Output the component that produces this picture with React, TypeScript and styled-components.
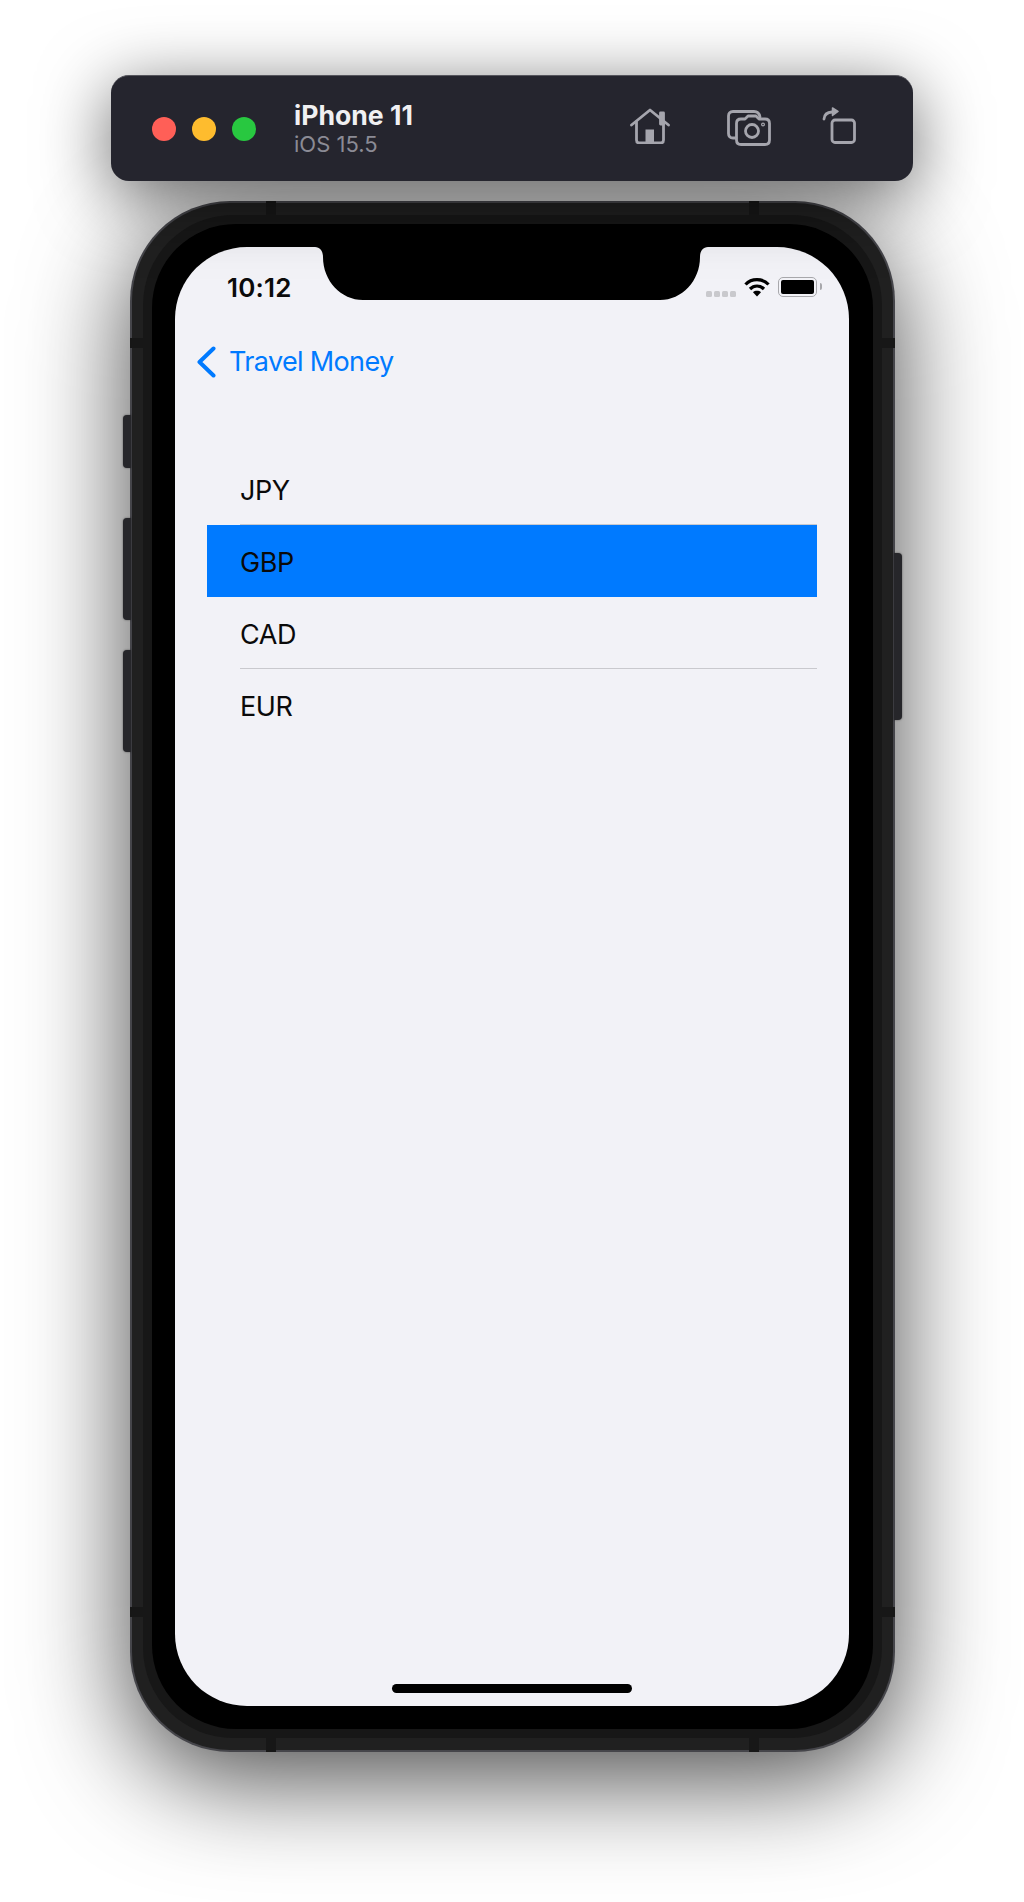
import React from 'react';
import styled, { createGlobalStyle } from 'styled-components';

const GlobalStyle = createGlobalStyle`
    html, body {
        margin: 0;
        background: #ffffff;
        font-family: Inter, "Liberation Sans", sans-serif;
    }
`;

const Page = styled.div`
    width: 1024px;
    height: 1902px;
    padding-top: 75px;
    box-sizing: border-box;
    overflow: hidden;
    display: flex;
    flex-direction: column;
    align-items: center;
`;

const Toolbar = styled.div`
    width: 802px;
    height: 106px;
    box-sizing: border-box;
    padding: 0 57px 0 41px;
    display: flex;
    align-items: center;
    background: #25252e;
    border-top: 1px solid #55555c;
    border-radius: 18px;
    box-shadow: 0 14px 70px rgba(0, 0, 0, 0.6);
    position: relative;
    z-index: 2;
`;

const Lights = styled.div`
    display: flex;
    gap: 16px;
`;

const Light = styled.span<{ $color: string }>`
    width: 24px;
    height: 24px;
    border-radius: 50%;
    background: ${ p => p.$color };
`;

const DeviceInfo = styled.div`
    margin-left: 38px;
    display: flex;
    flex-direction: column;
    flex: 1;
`;

const DeviceName = styled.div`
    margin: -1px 0 1px;
    font-size: 26.6px;
    line-height: 32px;
    font-weight: 700;
    color: #f0f0f2;
`;

const DeviceOs = styled.div`
    font-size: 22px;
    line-height: 25px;
    color: #8b8b95;
`;

const ToolbarIcons = styled.div`
    display: flex;
    align-items: center;
`;

const ToolIcon = styled.svg<{ $gap?: number; $lift: number }>`
    display: block;
    margin-left: ${ p => p.$gap || 0 }px;
    margin-bottom: ${ p => p.$lift }px;
    fill: none;
    stroke: #a5a5ad;
    stroke-width: 2.8;
    stroke-linecap: round;
    stroke-linejoin: round;
`;

const Phone = styled.div`
    position: relative;
    margin-top: 20px;
    margin-left: 1px;
    width: 765px;
    height: 1551px;
    box-sizing: border-box;
    padding: 2px;
    border-radius: 100px;
    background: #45454a;
    box-shadow: 0 26px 105px rgba(0, 0, 0, 0.72);
`;

const Casing = styled.div`
    height: 100%;
    box-sizing: border-box;
    padding: 12px 11px;
    border-radius: 98px;
    background: #202020;
`;

const InnerRing = styled.div`
    height: 100%;
    box-sizing: border-box;
    padding: 9px;
    border-radius: 90px;
    background: #171717;
`;

const Bezel = styled.div`
    height: 100%;
    box-sizing: border-box;
    padding: 23px 24px 23px 23px;
    border-radius: 84px;
    background: #000000;
`;

const Screen = styled.div`
    position: relative;
    height: 100%;
    overflow: hidden;
    border-radius: 72px;
    background: #f2f2f7;
    display: flex;
    flex-direction: column;
`;

const Notch = styled.svg`
    position: absolute;
    top: 0;
    left: 140px;
    fill: #000000;
`;

const SideButton = styled.div<{ $side: 'left' | 'right'; $top: number; $height: number }>`
    position: absolute;
    top: ${ p => p.$top }px;
    height: ${ p => p.$height }px;
    ${ p => p.$side }: -7px;
    width: 8px;
    background: #26262a;
    border-radius: ${ p => (p.$side === 'left' ? '4px 0 0 4px' : '0 4px 4px 0') };
    box-shadow: 0 0 2px rgba(0, 0, 0, 0.5);
`;

const BandH = styled.div<{ $edge: 'top' | 'bottom'; $left: number }>`
    position: absolute;
    ${ p => p.$edge }: 0;
    left: ${ p => p.$left }px;
    width: 10px;
    height: 14px;
    background: #171717;
`;

const BandV = styled.div<{ $edge: 'left' | 'right'; $top: number }>`
    position: absolute;
    ${ p => p.$edge }: 0;
    top: ${ p => p.$top }px;
    width: 13px;
    height: 10px;
    background: #171717;
`;

const StatusBar = styled.div`
    height: 80px;
    flex: none;
    box-sizing: border-box;
    padding: 25px 32px 0 52px;
    display: flex;
    align-items: flex-start;
`;

const Time = styled.div`
    flex: 1;
    font-size: 26px;
    line-height: 32px;
    font-weight: 600;
    color: #0b0b0b;
    letter-spacing: 0.2px;
`;

const SignalDots = styled.div`
    display: flex;
    gap: 2px;
    margin-top: 19px;
`;

const SignalDot = styled.span`
    width: 6px;
    height: 6px;
    border-radius: 1.5px;
    background: #c9c9cd;
`;

const Wifi = styled.svg`
    display: block;
    margin: 5px 0 0 8px;
    fill: none;
    stroke: #000000;
    stroke-width: 3.2;
`;

const Battery = styled.div`
    margin: 5px 0 0 8px;
    width: 39px;
    height: 20px;
    box-sizing: border-box;
    padding: 2px;
    border: 1.5px solid #a8a8ac;
    border-radius: 5px;
    position: relative;
    &::after {
        content: '';
        position: absolute;
        right: -6px;
        top: 4.5px;
        width: 2.5px;
        height: 7px;
        border-radius: 0 2px 2px 0;
        background: #a8a8ac;
    }
`;

const BatteryLevel = styled.div`
    height: 100%;
    border-radius: 2px;
    background: #000000;
`;

const NavBar = styled.div`
    height: 68px;
    flex: none;
    box-sizing: border-box;
    padding: 2px 0 0 22px;
    display: flex;
    align-items: center;
`;

const BackIcon = styled.svg`
    display: block;
    fill: none;
    stroke: #007aff;
    stroke-width: 4;
    stroke-linecap: round;
    stroke-linejoin: round;
`;

const BackLabel = styled.span`
    margin-left: 12px;
    font-size: 27px;
    line-height: 34px;
    color: #007aff;
    letter-spacing: -0.65px;
`;

const List = styled.div`
    margin: 58px 32px 0;
`;

const Row = styled.div<{ $selected?: boolean }>`
    height: 72px;
    padding-left: 33px;
    background: ${ p => (p.$selected ? '#007aff' : 'transparent') };
`;

const RowInner = styled.div<{ $separator?: boolean }>`
    height: 100%;
    box-sizing: border-box;
    padding-top: 4px;
    display: flex;
    align-items: center;
    font-size: 27px;
    color: #0a0a0a;
    letter-spacing: -0.4px;
    border-bottom: 1.5px solid ${ p => (p.$separator ? '#c9c9ce' : 'transparent') };
`;

const HomeBar = styled.div`
    position: absolute;
    left: 217px;
    bottom: 13px;
    width: 240px;
    height: 9px;
    border-radius: 4.5px;
    background: #000000;
`;

const rows = [
    { code: 'JPY', separator: true },
    { code: 'GBP', selected: true },
    { code: 'CAD', separator: true },
    { code: 'EUR' }
];

const App = () => (
    <Page>
        <GlobalStyle />
        <Toolbar>
            <Lights>
                <Light $color='#ff5f57' />
                <Light $color='#febc2e' />
                <Light $color='#28c840' />
            </Lights>
            <DeviceInfo>
                <DeviceName>iPhone 11</DeviceName>
                <DeviceOs>iOS 15.5</DeviceOs>
            </DeviceInfo>
            <ToolbarIcons>
                <ToolIcon $lift={ 6 } width='40' height='36' viewBox='0 0 40 36'>
                    <path d='M1.5 17 L20 2 L38.5 17' />
                    <rect x='30.5' y='5' width='3' height='11' fill='#a5a5ad' />
                    <path d='M6.5 14 V32 Q6.5 35 9.5 35 H30.5 Q33.5 35 33.5 32 V14' />
                    <rect x='15.5' y='21.5' width='8.5' height='13' fill='#a5a5ad' stroke='none' />
                </ToolIcon>
                <ToolIcon $gap={ 57 } $lift={ 2 } width='44' height='36' viewBox='0 0 44 36'>
                    <path d='M9 28 H6 Q1.5 28 1.5 23.5 V6 Q1.5 1.5 6 1.5 H27 Q32 1.5 33 7' />
                    <path d='M14 9 H18 L21 6 H29 L32 9 H38 Q42.5 9 42.5 13.5 V30 Q42.5 34.5 38 34.5 H14 Q9.5 34.5 9.5 30 V13.5 Q9.5 9 14 9 Z' />
                    <circle cx='25' cy='21' r='6.5' />
                    <circle cx='36' cy='14.5' r='0.6' />
                </ToolIcon>
                <ToolIcon $gap={ 51 } $lift={ 8 } width='34' height='38' viewBox='0 0 34 38'>
                    <rect x='10' y='14' width='22.5' height='22.5' rx='3' />
                    <path d='M2 13 Q2.5 6.5 10 6' />
                    <path d='M10.5 2 L16 5.5 L10.5 9.5 Z' fill='#a5a5ad' strokeWidth='1.5' />
                </ToolIcon>
            </ToolbarIcons>
        </Toolbar>

        <Phone>
            <SideButton $side='left' $top={ 214 } $height={ 53 } />
            <SideButton $side='left' $top={ 317 } $height={ 102 } />
            <SideButton $side='left' $top={ 449 } $height={ 102 } />
            <SideButton $side='right' $top={ 352 } $height={ 167 } />
            <Casing>
                <InnerRing>
                    <Bezel>
                        <Screen>
                            <StatusBar>
                                <Time>10:12</Time>
                                <SignalDots>
                                    <SignalDot />
                                    <SignalDot />
                                    <SignalDot />
                                    <SignalDot />
                                </SignalDots>
                                <Wifi width='26' height='20' viewBox='0 0 26 20'>
                                    <path d='M1.5 7.5 C7.5 1 18.5 1 24.5 7.5' />
                                    <path d='M6 12 C10 8 16 8 20 12' />
                                    <path d='M13 19.5 L9 15.2 C11 13.4 15 13.4 17 15.2 Z' fill='#000000' stroke='none' />
                                </Wifi>
                                <Battery>
                                    <BatteryLevel />
                                </Battery>
                            </StatusBar>
                            <NavBar>
                                <BackIcon width='20' height='32' viewBox='0 0 20 32'>
                                    <path d='M16.5 2.5 L2.5 16 L16.5 29.5' />
                                </BackIcon>
                                <BackLabel>Travel Money</BackLabel>
                            </NavBar>
                            <List>
                                {
                                    rows.map(row => (
                                        <Row key={ row.code } $selected={ row.selected }>
                                            <RowInner $separator={ row.separator }>{ row.code }</RowInner>
                                        </Row>
                                    ))
                                }
                            </List>
                            <Notch width='393' height='53' viewBox='0 0 393 53'>
                                <path d='M0 0 C5 0 8 4 8 10 C8 34 26 53 48 53 H345 C367 53 385 34 385 10 C385 4 388 0 393 0 Z' />
                            </Notch>
                            <HomeBar />
                        </Screen>
                    </Bezel>
                </InnerRing>
            </Casing>
            <BandH $edge='top' $left={ 136 } />
            <BandH $edge='top' $left={ 619 } />
            <BandH $edge='bottom' $left={ 136 } />
            <BandH $edge='bottom' $left={ 619 } />
            <BandV $edge='left' $top={ 137 } />
            <BandV $edge='right' $top={ 137 } />
            <BandV $edge='left' $top={ 1406 } />
            <BandV $edge='right' $top={ 1406 } />
        </Phone>
    </Page>
);

export default App;
